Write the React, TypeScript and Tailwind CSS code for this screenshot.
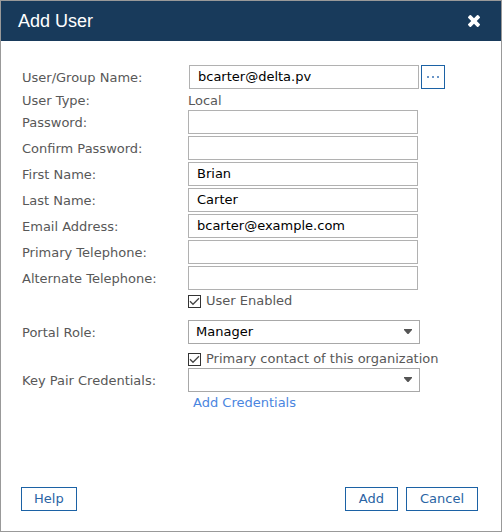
import React from "react";

const inputClass =
  "block h-6 w-[230px] border border-[#b1b1b1] bg-white px-2 pb-0.5 text-[13px] text-black outline-none";
const buttonClass = "h-6 border border-[#1c62a5] bg-white text-[#2a64a4] leading-4";
const labelClass = "w-[166px] shrink-0 pt-0.5";

function Field({
  id,
  label,
  type = "text",
  value,
}: {
  id: string;
  label: string;
  type?: string;
  value?: string;
}) {
  return (
    <div className="flex items-center">
      <label htmlFor={id} className={labelClass}>
        {label}
      </label>
      <input id={id} type={type} defaultValue={value} className={inputClass} />
    </div>
  );
}

function SelectField({ id, label, options }: { id: string; label: string; options: string[] }) {
  return (
    <div className="flex items-center">
      <label htmlFor={id} className={labelClass}>
        {label}
      </label>
      <div className="relative">
        <select
          id={id}
          className="block h-6 w-[232px] appearance-none border border-[#a8a8a8] bg-white pl-[7px] text-[13px] text-black outline-none"
        >
          {options.map((o) => (
            <option key={o}>{o}</option>
          ))}
        </select>
        <svg
          viewBox="0 0 8 5"
          className="pointer-events-none absolute top-[9px] right-2 h-[5px] w-2 fill-[#555]"
          aria-hidden="true"
        >
          <path d="M0 0h8v1L4.500 5h-1L0 1z" />
        </svg>
      </div>
    </div>
  );
}

function CheckField({ label }: { label: string }) {
  return (
    <label className="ml-[166px] flex items-center gap-[5px]">
      <span className="relative block size-[13px]">
        <input
          type="checkbox"
          defaultChecked
          className="peer block size-[13px] appearance-none border border-[#333] bg-white"
        />
        <svg
          viewBox="0 0 13 13"
          className="pointer-events-none absolute inset-0 hidden size-[13px] peer-checked:block"
          fill="none"
          stroke="#444"
          strokeWidth="1.3"
          aria-hidden="true"
        >
          <path d="M2 6.300 5 9.300 11 3.300" />
        </svg>
      </span>
      {label}
    </label>
  );
}

export default function App() {
  return (
    <form
      onSubmit={(e) => e.preventDefault()}
      className="flex min-h-screen flex-col border border-[#999] bg-white font-['DejaVu_Sans',Verdana,sans-serif] text-[13px] leading-4 text-[#585858]"
    >
      <header className="flex h-10 items-center justify-between bg-[#183a5b] pr-[21px] pl-[17px] text-white">
        <h1 className="font-['Liberation_Sans',Arial,sans-serif] text-lg leading-5">Add User</h1>
        <button type="button" aria-label="Close">
          <svg viewBox="302 366 1188 1188" className="block size-3 fill-white" aria-hidden="true">
            <path d="M1490 1322q0 40-28 68l-136 136q-28 28-68 28t-68-28l-294-294-294 294q-28 28-68 28t-68-28l-136-136q-28-28-28-68t28-68l294-294-294-294q-28-28-28-68t28-68l136-136q28-28 68-28t68 28l294 294 294-294q28-28 68-28t68 28l136 136q28 28 28 68t-28 68l-294 294 294 294q28 28 28 68z" />
          </svg>
        </button>
      </header>

      <main className="px-[21px] pt-6">
        <div className="flex items-center">
          <label htmlFor="account" className="w-[167px] shrink-0 pt-0.5">
            User/Group Name:
          </label>
          <input id="account" type="text" defaultValue="bcarter@delta.pv" className={inputClass} />
          <button
            type="button"
            aria-label="Browse users"
            className="ml-0.5 grid size-6 place-items-center border border-[#1c62a5] bg-white"
          >
            <svg viewBox="0 0 14 2" className="h-0.5 w-3.5 fill-[#6a96c8]" aria-hidden="true">
              <path d="M1 0h2v2H1zM6 0h2v2H6zM11 0h2v2h-2z" />
            </svg>
          </button>
        </div>
        <div className="flex h-[21px] items-center">
          <span className={labelClass}>User Type:</span>
          <span className="pt-0.5">Local</span>
        </div>
        <div className="flex flex-col gap-0.5">
          <Field id="password" label="Password:" type="password" />
          <Field id="confirm" label="Confirm Password:" type="password" />
          <Field id="first" label="First Name:" value="Brian" />
          <Field id="last" label="Last Name:" value="Carter" />
          <Field id="email" label="Email Address:" type="email" value="bcarter@example.com" />
          <Field id="phone" label="Primary Telephone:" type="tel" />
          <Field id="phone2" label="Alternate Telephone:" type="tel" />
        </div>
        <div className="pt-[3px] pb-[11px]">
          <CheckField label="User Enabled" />
        </div>
        <SelectField id="role" label="Portal Role:" options={["Manager", "Participant"]} />
        <div className="pt-[7px] pb-px">
          <CheckField label="Primary contact of this organization" />
        </div>
        <SelectField id="keys" label="Key Pair Credentials:" options={[""]} />
        <a href="#credentials" className="mt-[3px] ml-[171px] inline-block text-[#4a85e0]">
          Add Credentials
        </a>
      </main>

      <footer className="mt-auto flex gap-2 pr-[23px] pb-5 pl-5">
        <button type="button" className={`${buttonClass} px-3`}>
          Help
        </button>
        <button type="submit" className={`${buttonClass} ml-auto px-[13px]`}>
          Add
        </button>
        <button type="button" className={`${buttonClass} px-[13px]`}>
          Cancel
        </button>
      </footer>
    </form>
  );
}
